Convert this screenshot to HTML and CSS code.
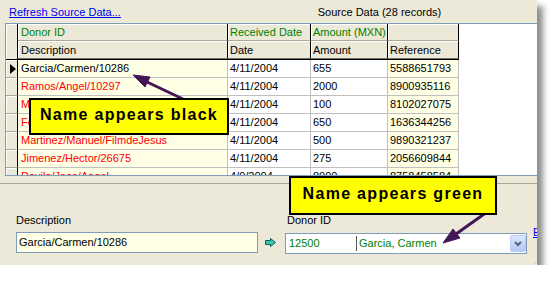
FILE: index.html
```html
<!DOCTYPE html>
<html>
<head>
<meta charset="UTF-8">
<title>Source Data</title>
<link rel="stylesheet" href="styles.css">
</head>
<body>
	<div class="window">
		<div class="topbar">
			<a class="refresh" href="#">Refresh Source Data...</a>
			<div class="title">Source Data (28 records)</div>
		</div>

		<div class="grid">
			<div class="head">
				<div class="corner"></div>
				<div class="head-rows">
					<div class="hrow top">
						<div class="hc c-desc">Donor ID</div>
						<div class="hc c-date">Received Date</div>
						<div class="hc c-amt">Amount (MXN)</div>
						<div class="hc c-ref"></div>
					</div>
					<div class="hrow sub">
						<div class="hc c-desc">Description</div>
						<div class="hc c-date">Date</div>
						<div class="hc c-amt">Amount</div>
						<div class="hc c-ref">Reference</div>
					</div>
				</div>
			</div>

			<div class="row current">
				<div class="rh"><svg class="pointer" width="6" height="10" viewBox="0 0 6 10"><polygon points="0,0 6,5 0,10" fill="#000"/></svg></div>
				<div class="cell c-desc">Garcia/Carmen/10286</div>
				<div class="cell c-date">4/11/2004</div>
				<div class="cell c-amt">655</div>
				<div class="cell c-ref">5588651793</div>
			</div>
			<div class="row">
				<div class="rh"></div>
				<div class="cell c-desc">Ramos/Angel/10297</div>
				<div class="cell c-date">4/11/2004</div>
				<div class="cell c-amt">2000</div>
				<div class="cell c-ref">8900935116</div>
			</div>
			<div class="row">
				<div class="rh"></div>
				<div class="cell c-desc">Morales/Luis/10301</div>
				<div class="cell c-date">4/11/2004</div>
				<div class="cell c-amt">100</div>
				<div class="cell c-ref">8102027075</div>
			</div>
			<div class="row">
				<div class="rh"></div>
				<div class="cell c-desc">Fernandez/Rosa/10312</div>
				<div class="cell c-date">4/11/2004</div>
				<div class="cell c-amt">650</div>
				<div class="cell c-ref">1636344256</div>
			</div>
			<div class="row">
				<div class="rh"></div>
				<div class="cell c-desc">Martinez/Manuel/FilmdeJesus</div>
				<div class="cell c-date">4/11/2004</div>
				<div class="cell c-amt">500</div>
				<div class="cell c-ref">9890321237</div>
			</div>
			<div class="row">
				<div class="rh"></div>
				<div class="cell c-desc">Jimenez/Hector/26675</div>
				<div class="cell c-date">4/11/2004</div>
				<div class="cell c-amt">275</div>
				<div class="cell c-ref">2056609844</div>
			</div>
			<div class="row">
				<div class="rh"></div>
				<div class="cell c-desc">Davila/Jose/Angel</div>
				<div class="cell c-date">4/9/2004</div>
				<div class="cell c-amt">8000</div>
				<div class="cell c-ref">8758458584</div>
			</div>
		</div>

		<div class="sep"></div>

		<div class="form">
			<div class="field">
				<label class="label">Description</label>
				<div class="textbox">Garcia/Carmen/10286</div>
			</div>
			<div class="go">
				<svg width="12" height="9" viewBox="0 0 12 9"><polygon points="0.5,2.5 5.5,2.5 5.5,0.5 10.5,4.5 5.5,8.5 5.5,6.5 0.5,6.5" fill="#38c8a8" stroke="#0b5a6a"/></svg>
			</div>
			<div class="field">
				<label class="label donor">Donor ID</label>
				<div class="combo">
					<span class="id">12500</span>
					<span class="name">Garcia, Carmen</span>
					<span class="drop"><svg width="8" height="6" viewBox="0 0 8 6"><polyline points="1,1 4,4 7,1" fill="none" stroke="#4d6185" stroke-width="2"/></svg></span>
				</div>
			</div>
			<div class="side">
				<a class="edit" href="#">Edit...</a>
				<div class="btn">Edit</div>
			</div>
		</div>

		<!-- annotations -->
		<svg class="arrows" width="537" height="265">
			<g fill="#451655" stroke="#451655">
				<line x1="183" y1="99" x2="147" y2="82" stroke-width="3"/>
				<polygon points="133,75 150,77 145,87" stroke-width="1"/>
				<line x1="487" y1="212" x2="456" y2="234" stroke-width="3"/>
				<polygon points="443,243 460,238 453,229" stroke-width="1"/>
			</g>
		</svg>
		<div class="callout callout-black">Name appears black</div>
		<div class="callout callout-green">Name appears green</div>
	</div>
</body>
</html>
```

FILE: styles.css
```css
/* page */
body {
	margin: 0;
	background: #ffffff;
	font-family: "Liberation Sans", Arial, sans-serif;
	font-size: 11px;
	color: #000000;
}

.window {
	position: relative;
	width: 537px;
	height: 265px;
	background: #ece9d8;
	overflow: hidden;
	box-shadow: 6px 6px 6px rgba(0, 0, 0, 0.45);
}

/* top bar */
.topbar {
	display: flex;
	height: 23px;
	box-sizing: border-box;
	padding-top: 6px;
	line-height: 13px;
}

.refresh {
	display: block;
	width: 222px;
	box-sizing: border-box;
	padding-left: 9px;
	color: #0000ee;
}

.title {
	flex: 1;
	text-align: center;
}

/* grid */
.grid {
	margin-left: 5px;
	width: 540px;
	height: 153px;
	box-sizing: border-box;
	border: 1px solid #7f9db9;
	border-right: 0;
	background: #ffffff;
	overflow: hidden;
}

.head {
	display: flex;
	width: max-content;
	border-bottom: 1px solid #000000;
}

.corner {
	width: 12px;
	box-sizing: border-box;
	border-right: 1px solid #000000;
	background: #ece9d8;
	box-shadow: inset 1px 1px #ffffff;
}

.hrow {
	display: flex;
}

.hc {
	flex-shrink: 0;
	height: 17px;
	box-sizing: border-box;
	padding-left: 2px;
	line-height: 16px;
	background: #ece9d8;
	border-right: 1px solid #000000;
	border-bottom: 1px solid #aca899;
	box-shadow: inset 1px 1px #ffffff;
	white-space: nowrap;
	overflow: hidden;
}

.hrow.top .hc {
	color: #008000;
}

.hrow.sub .hc {
	height: 18px;
	padding-top: 1px;
	border-bottom-color: #716f64;
}

.row {
	display: flex;
	height: 18px;
}

.rh {
	display: flex;
	flex-shrink: 0;
	align-items: center;
	width: 12px;
	box-sizing: border-box;
	background: #ece9d8;
	border-right: 1px solid #000000;
	border-bottom: 1px solid #aca899;
	box-shadow: inset 1px 1px #ffffff;
}

.pointer {
	margin-left: 4px;
}

.cell {
	flex-shrink: 0;
	box-sizing: border-box;
	padding-left: 2px;
	line-height: 17px;
	border-right: 1px solid #c0c0c0;
	border-bottom: 1px solid #c0c0c0;
	white-space: nowrap;
	overflow: hidden;
}

.c-desc { width: 210px; padding-left: 3px; }
.c-date { width: 83px; }
.c-amt { width: 77px; }
.c-ref { width: 71px; }

.cell.c-desc,
.cell.c-ref {
	background: #ffffe6;
}

.cell.c-desc {
	color: #ff0000;
}

.row.current .cell.c-desc {
	color: #000000;
}

.sep {
	margin-top: 7px;
	height: 1px;
	background: #aca899;
}

/* detail form */
.form {
	display: flex;
	padding: 30px 0 0 16px;
}

.field {
	flex-shrink: 0;
	width: 242px;
}

.label {
	display: block;
	height: 13px;
	line-height: 13px;
}

.label.donor {
	padding-left: 2px;
}

.textbox {
	margin-top: 5px;
	height: 21px;
	box-sizing: border-box;
	padding-left: 2px;
	line-height: 19px;
	background: #ffffe6;
	border: 1px solid #7f9db9;
}

.go {
	display: flex;
	flex-shrink: 0;
	align-items: center;
	width: 27px;
	height: 21px;
	margin-top: 18px;
	box-sizing: border-box;
	padding-left: 7px;
}

.combo {
	display: flex;
	align-items: center;
	margin-top: 6px;
	height: 21px;
	box-sizing: border-box;
	padding-left: 3px;
	background: #ffffff;
	border: 1px solid #7f9db9;
	color: #008000;
}

.combo .id {
	width: 67px;
	line-height: 19px;
}

.combo .name {
	flex: 1;
	height: 15px;
	padding-left: 2px;
	line-height: 15px;
	border-left: 1px solid #555555;
}

.drop {
	display: flex;
	align-items: center;
	justify-content: center;
	width: 16px;
	height: 17px;
	box-sizing: border-box;
	border: 1px solid #b9cbf3;
	border-radius: 2px;
	background: linear-gradient(#dce6fd, #b4c8f5);
}

.side {
	flex-shrink: 0;
	margin-left: 6px;
}

.edit {
	display: block;
	margin-top: 12px;
	line-height: 13px;
	color: #0000ee;
	white-space: nowrap;
}

.btn {
	margin: 23px 0 0 1px;
	width: 75px;
	height: 21px;
	box-sizing: border-box;
	border: 1px solid #c5c2b2;
	border-radius: 3px;
	background: linear-gradient(#ffffff, #ecebe6);
}

/* annotations */
.arrows {
	position: absolute;
	left: 0;
	top: 0;
}

.callout {
	position: absolute;
	box-sizing: border-box;
	background: #ffff00;
	border: 2px solid #000000;
	font-size: 16px;
	font-weight: bold;
	letter-spacing: 1.3px;
	line-height: 18px;
	text-align: center;
	white-space: nowrap;
}

.callout-black {
	left: 29px;
	top: 98px;
	width: 200px;
	height: 37px;
	padding-top: 6px;
}

.callout-green {
	left: 289px;
	top: 176px;
	width: 208px;
	height: 39px;
	padding-top: 7px;
}
```
